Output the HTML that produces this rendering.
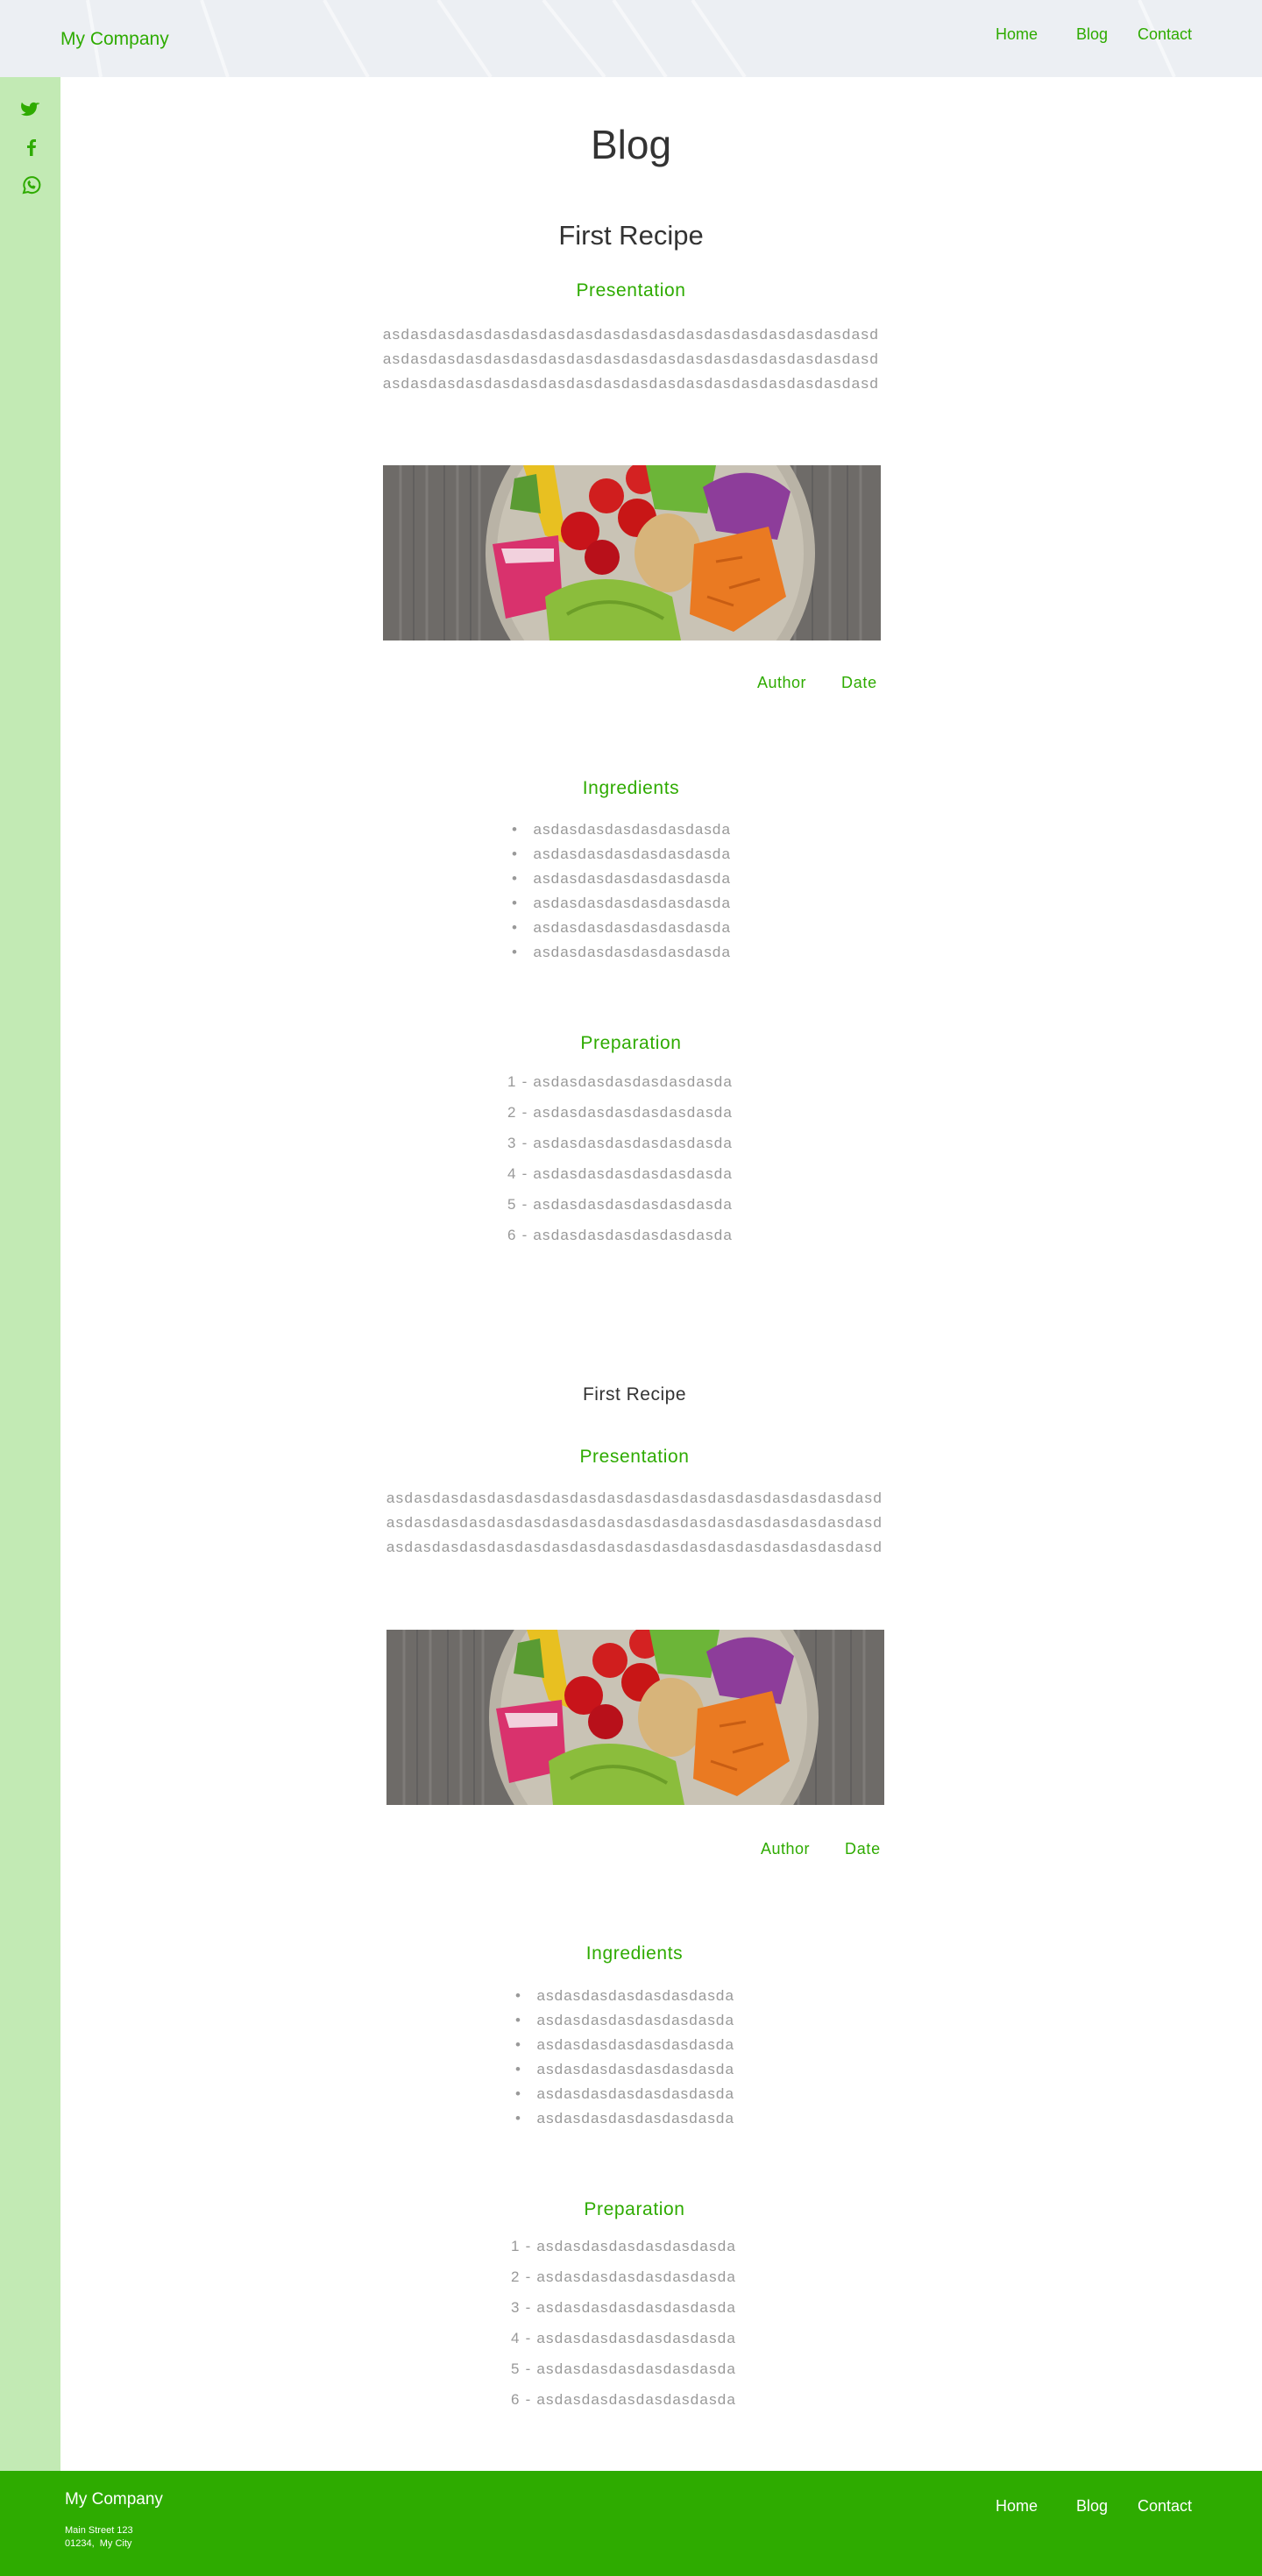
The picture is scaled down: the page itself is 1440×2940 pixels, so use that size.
<!DOCTYPE html>
<html><head><meta charset="utf-8"><style>
*{margin:0;padding:0;box-sizing:border-box}
body{width:1440px;height:2940px;position:relative;background:#fff;font-family:"Liberation Sans",sans-serif;overflow:hidden}
.hdr{position:absolute;left:0;top:0;width:1440px;height:88px;background:#eceff3;overflow:hidden}
.side{position:absolute;left:0;top:88px;width:69px;height:2732px;background:#c2eab4}
.ab{position:absolute;white-space:nowrap}
.c{position:absolute;left:0;width:1440px;text-align:center;white-space:nowrap}
.g{color:#2eab00}
.t{color:#999;font-size:17px;letter-spacing:1.35px}
.h3{color:#2eab00;font-size:21px;letter-spacing:.6px}
.nav{font-size:18px}
.foot{position:absolute;left:0;top:2820px;width:1440px;height:120px;background:#2eab00;color:#fff}
</style></head><body>
<div class="hdr">
<svg width="1440" height="88" style="position:absolute;left:0;top:0">
<g stroke="#fff" stroke-width="4" opacity=".55" fill="none">
<path d="M230 0 L260 88"/><path d="M370 0 L420 88"/><path d="M500 0 L560 88"/><path d="M620 0 L690 88"/><path d="M700 0 L760 88"/><path d="M790 0 L850 88"/><path d="M100 0 L115 88"/><path d="M1300 0 L1340 88"/>
</g></svg>
<div class="ab g" style="left:69px;top:33px;font-size:21px">My Company</div>
<div class="ab g nav" style="left:1136px;top:29px">Home</div>
<div class="ab g nav" style="left:1228px;top:29px">Blog</div>
<div class="ab g nav" style="left:1298px;top:29px">Contact</div>
</div>
<div class="side">
<svg width="69" height="150" style="position:absolute;left:0;top:0" fill="#2eab00">
<path transform="translate(24,28) scale(0.9)" d="M23 3a10 10 0 0 1-3 1 5 5 0 0 0 2-3 10 10 0 0 1-3 1 5 5 0 0 0-8 4A13 13 0 0 1 1 1s-4 9 5 13a12 12 0 0 1-6 2c9 5 20 0 20-11a5 5 0 0 0 0-1 8 8 0 0 0 3-3z"/>
<path transform="translate(26,70)" d="M8 20V11H5V8h3V5.5C8 3 9.5 1 12.5 1H15v3h-2c-1 0-1.5.5-1.5 1.5V8H15l-.5 3H11.5v9z"/>
<g transform="translate(24,113)" fill="none" stroke="#2eab00" stroke-width="2"><path d="M3 19l1.5-4.5A9 9 0 1 1 8 18z"/><path d="M8 7c0 4 3 7 7 7l1-2-2-1-1 1c-1.5-.5-3-2-3.5-3.5l1-1-1-2z" fill="#2eab00" stroke-width="1"/></g>
</svg>
</div>

<div class="c" style="top:138px;font-size:46px;color:#333">Blog</div>

<div style="position:absolute;left:0;top:2px;width:1440px">
<div class="c" style="top:249px;font-size:31px;color:#333">First Recipe</div>
<div class="c h3" style="top:318px">Presentation</div>
<div class="c t" style="top:366px;line-height:28px">asdasdasdasdasdasdasdasdasdasdasdasdasdasdasdasdasdasd<br>asdasdasdasdasdasdasdasdasdasdasdasdasdasdasdasdasdasd<br>asdasdasdasdasdasdasdasdasdasdasdasdasdasdasdasdasdasd</div>
<svg class="ab" style="left:437px;top:529px" width="568" height="200" viewBox="0 0 568 200">
<defs><clipPath id="cp"><rect width="568" height="200"/></clipPath></defs>
<g clip-path="url(#cp)">
<rect width="568" height="200" fill="#6e6b68"/>
<g stroke="#8a8683" stroke-width="3" opacity=".6"><path d="M20 0V200M50 0V200M85 0V200M110 0V200M470 0V200M510 0V200M545 0V200"/></g>
<g stroke="#555" stroke-width="2" opacity=".5"><path d="M35 0V200M70 0V200M100 0V200M490 0V200M530 0V200"/></g>
<circle cx="305" cy="100" r="188" fill="#b9b3a6"/>
<circle cx="305" cy="100" r="175" fill="#c9c3b5"/>
<path d="M160 0 L195 0 L210 90 L185 80z" fill="#e8c021"/>
<path d="M125 90 L200 80 L205 160 L140 175z" fill="#d9326d"/>
<path d="M135 95 L195 95 L195 110 L140 112z" fill="#f2d1dd"/>
<path d="M185 150 Q250 110 330 150 L340 200 L190 200z" fill="#8bbd3c"/>
<path d="M210 170 Q260 140 320 175" stroke="#6c9e28" stroke-width="4" fill="none"/>
<circle cx="225" cy="75" r="22" fill="#c8141a"/><circle cx="255" cy="35" r="20" fill="#d01e1e"/>
<circle cx="290" cy="60" r="22" fill="#c81616"/><circle cx="250" cy="105" r="20" fill="#b8101a"/>
<circle cx="295" cy="15" r="18" fill="#d42222"/>
<path d="M300 0 L380 0 L370 55 L310 50z" fill="#6cb538"/>
<ellipse cx="325" cy="100" rx="38" ry="45" fill="#d7b47a"/>
<path d="M365 25 Q420 -10 465 30 L450 85 L380 75z" fill="#8d3d9a"/>
<path d="M355 90 L440 70 L460 150 L400 190 L350 170z" fill="#ea7a22"/>
<path d="M380 110 L410 105 M395 140 L430 130 M370 150 L400 160" stroke="#c85d13" stroke-width="3"/>
<path d="M150 15 L175 10 L180 55 L145 50z" fill="#5a9b33"/>
</g></svg>
<div class="ab g nav" style="left:864px;top:767px;letter-spacing:.5px">Author</div>
<div class="ab g nav" style="left:960px;top:767px;letter-spacing:.7px">Date</div>
<div class="c h3" style="top:886px">Ingredients</div>
<div class="ab t" style="left:584px;top:931px;line-height:28px;letter-spacing:1.1px">•&nbsp;&nbsp; asdasdasdasdasdasdasda<br>•&nbsp;&nbsp; asdasdasdasdasdasdasda<br>•&nbsp;&nbsp; asdasdasdasdasdasdasda<br>•&nbsp;&nbsp; asdasdasdasdasdasdasda<br>•&nbsp;&nbsp; asdasdasdasdasdasdasda<br>•&nbsp;&nbsp; asdasdasdasdasdasdasda</div>
<div class="c h3" style="top:1177px">Preparation</div>
<div class="ab t" style="left:579px;top:1215px;line-height:35px;letter-spacing:1.2px">1 - asdasdasdasdasdasdasda<br>2 - asdasdasdasdasdasdasda<br>3 - asdasdasdasdasdasdasda<br>4 - asdasdasdasdasdasdasda<br>5 - asdasdasdasdasdasdasda<br>6 - asdasdasdasdasdasdasda</div>
</div>

<div style="position:absolute;left:4px;top:1332px;width:1440px">
<div class="c" style="top:248px;font-size:21px;color:#333;letter-spacing:.5px">First Recipe</div>
<div class="c h3" style="top:319px">Presentation</div>
<div class="c t" style="top:364px;line-height:28px">asdasdasdasdasdasdasdasdasdasdasdasdasdasdasdasdasdasd<br>asdasdasdasdasdasdasdasdasdasdasdasdasdasdasdasdasdasd<br>asdasdasdasdasdasdasdasdasdasdasdasdasdasdasdasdasdasd</div>
<svg class="ab" style="left:437px;top:528px" width="568" height="200" viewBox="0 0 568 200">
<defs><clipPath id="cp2"><rect width="568" height="200"/></clipPath></defs>
<g clip-path="url(#cp2)">
<rect width="568" height="200" fill="#6e6b68"/>
<g stroke="#8a8683" stroke-width="3" opacity=".6"><path d="M20 0V200M50 0V200M85 0V200M110 0V200M470 0V200M510 0V200M545 0V200"/></g>
<g stroke="#555" stroke-width="2" opacity=".5"><path d="M35 0V200M70 0V200M100 0V200M490 0V200M530 0V200"/></g>
<circle cx="305" cy="100" r="188" fill="#b9b3a6"/>
<circle cx="305" cy="100" r="175" fill="#c9c3b5"/>
<path d="M160 0 L195 0 L210 90 L185 80z" fill="#e8c021"/>
<path d="M125 90 L200 80 L205 160 L140 175z" fill="#d9326d"/>
<path d="M135 95 L195 95 L195 110 L140 112z" fill="#f2d1dd"/>
<path d="M185 150 Q250 110 330 150 L340 200 L190 200z" fill="#8bbd3c"/>
<path d="M210 170 Q260 140 320 175" stroke="#6c9e28" stroke-width="4" fill="none"/>
<circle cx="225" cy="75" r="22" fill="#c8141a"/><circle cx="255" cy="35" r="20" fill="#d01e1e"/>
<circle cx="290" cy="60" r="22" fill="#c81616"/><circle cx="250" cy="105" r="20" fill="#b8101a"/>
<circle cx="295" cy="15" r="18" fill="#d42222"/>
<path d="M300 0 L380 0 L370 55 L310 50z" fill="#6cb538"/>
<ellipse cx="325" cy="100" rx="38" ry="45" fill="#d7b47a"/>
<path d="M365 25 Q420 -10 465 30 L450 85 L380 75z" fill="#8d3d9a"/>
<path d="M355 90 L440 70 L460 150 L400 190 L350 170z" fill="#ea7a22"/>
<path d="M380 110 L410 105 M395 140 L430 130 M370 150 L400 160" stroke="#c85d13" stroke-width="3"/>
<path d="M150 15 L175 10 L180 55 L145 50z" fill="#5a9b33"/>
</g></svg>
<div class="ab g nav" style="left:864px;top:768px;letter-spacing:.5px">Author</div>
<div class="ab g nav" style="left:960px;top:768px;letter-spacing:.7px">Date</div>
<div class="c h3" style="top:886px">Ingredients</div>
<div class="ab t" style="left:584px;top:932px;line-height:28px;letter-spacing:1.1px">•&nbsp;&nbsp; asdasdasdasdasdasdasda<br>•&nbsp;&nbsp; asdasdasdasdasdasdasda<br>•&nbsp;&nbsp; asdasdasdasdasdasdasda<br>•&nbsp;&nbsp; asdasdasdasdasdasdasda<br>•&nbsp;&nbsp; asdasdasdasdasdasdasda<br>•&nbsp;&nbsp; asdasdasdasdasdasdasda</div>
<div class="c h3" style="top:1178px">Preparation</div>
<div class="ab t" style="left:579px;top:1214px;line-height:35px;letter-spacing:1.2px">1 - asdasdasdasdasdasdasda<br>2 - asdasdasdasdasdasdasda<br>3 - asdasdasdasdasdasdasda<br>4 - asdasdasdasdasdasdasda<br>5 - asdasdasdasdasdasdasda<br>6 - asdasdasdasdasdasdasda</div>
</div>

<div class="foot">
<div class="ab" style="left:74px;top:22px;font-size:19px">My Company</div>
<div class="ab" style="left:74px;top:61px;font-size:11px;line-height:15px">Main Street 123<br>01234,&nbsp; My City</div>
<div class="ab nav" style="left:1136px;top:30px">Home</div>
<div class="ab nav" style="left:1228px;top:30px">Blog</div>
<div class="ab nav" style="left:1298px;top:30px">Contact</div>
</div>
</body></html>
